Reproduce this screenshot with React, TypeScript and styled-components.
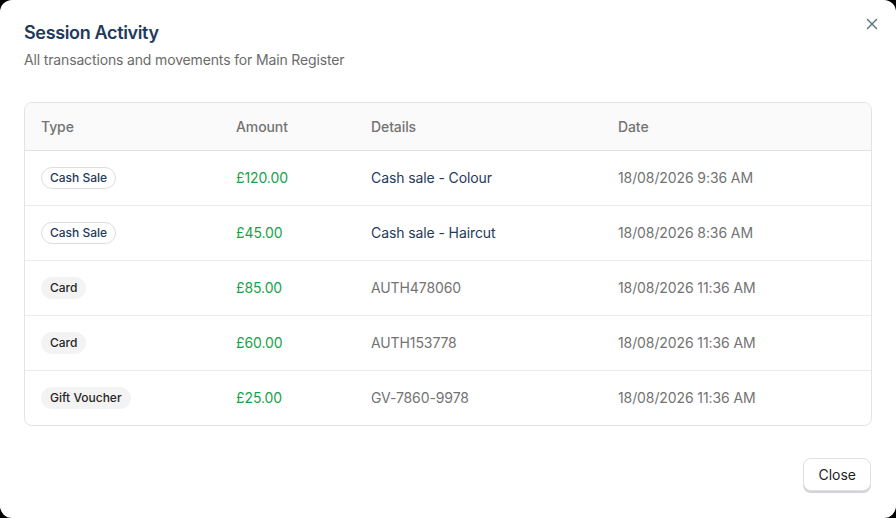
import React from 'react';
import styled, { createGlobalStyle } from 'styled-components';

const GlobalStyle = createGlobalStyle`
  html, body {
    margin: 0;
    padding: 0;
    background-color: #000000;
  }
  body {
    font-family: Inter, 'Noto Sans', sans-serif;
    letter-spacing: -0.1px;
  }
`

const Dialog = styled.div`
    position: relative;
    width: 896px;
    height: 518px;
    box-sizing: border-box;
    background-color: #ffffff;
    border-radius: 12px;
    padding: 20px 24px 24px 24px;
    display: flex;
    flex-direction: column;
`

const Header = styled.div`
    display: flex;
    flex-direction: column;
    gap: 4px;
`

const Title = styled.h2`
    margin: 0;
    font-size: 18px;
    line-height: 26px;
    font-weight: 600;
    letter-spacing: -0.35px;
    color: #1e3a5c;
`

const Subtitle = styled.p`
    margin: 0;
    font-size: 14px;
    line-height: 20px;
    letter-spacing: -0.15px;
    color: #6b6b6b;
`

const CloseIcon = styled.button`
    position: absolute;
    top: 16px;
    right: 16px;
    width: 16px;
    height: 16px;
    padding: 0;
    border: none;
    background: none;
    display: flex;
    align-items: center;
    justify-content: center;
    color: #5b6b80;
    cursor: pointer;
`

const TableCard = styled.div`
    margin-top: 32px;
    border: 1px solid #e3e3e3;
    border-radius: 8px;
    overflow: hidden;
`

const Table = styled.table`
    width: 100%;
    border-collapse: collapse;
    table-layout: fixed;
`

const HeadCell = styled.th<{ width?: number }>`
    box-sizing: border-box;
    width: ${props => props.width ? props.width + 'px' : 'auto'};
    height: 47px;
    padding: 0 16px;
    text-align: left;
    font-size: 14px;
    font-weight: 500;
    color: #737373;
    background-color: #fafafa;
    border-bottom: 1px solid #e3e3e3;
`

const Row = styled.tr`
    &:not(:last-child) td {
        border-bottom: 1px solid #ebebeb;
    }
`

const Cell = styled.td<{ tone?: 'navy' | 'green' | 'gray' }>`
    height: 54px;
    padding: 0 16px;
    font-size: 14px;
    color: ${props => props.tone === 'green' ? '#16a34a' : props.tone === 'navy' ? '#1e3a5c' : '#737373'};
`

const Badge = styled.span<{ outline?: boolean }>`
    display: inline-flex;
    align-items: center;
    height: 22px;
    box-sizing: border-box;
    padding: 0 8px;
    border-radius: 11px;
    font-size: 12px;
    font-weight: 500;
    letter-spacing: 0;
    border: 1px solid ${props => props.outline ? '#dedede' : '#f3f3f3'};
    background-color: ${props => props.outline ? '#ffffff' : '#f3f3f3'};
    color: ${props => props.outline ? '#1e3a5c' : '#262626'};
`

const Footer = styled.div`
    margin-top: auto;
    display: flex;
    justify-content: flex-end;
    padding-right: 1px;
    padding-bottom: 3px;
`

const Button = styled.button`
    height: 33px;
    padding: 0 14px;
    border: 1px solid #e0e0e0;
    border-radius: 8px;
    background-color: #ffffff;
    font-family: Inter, 'Noto Sans', sans-serif;
    font-size: 14px;
    color: #1f1f1f;
    box-shadow: 0 2px 0 #d4d4d8;
    cursor: pointer;
`

interface Activity {
    type: string
    outline: boolean
    amount: string
    details: string
    detailTone: 'navy' | 'gray'
    date: string
}

const rows: Activity[] = [
    { type: 'Cash Sale', outline: true, amount: '£120.00', details: 'Cash sale - Colour', detailTone: 'navy', date: '18/08/2026 9:36 AM' },
    { type: 'Cash Sale', outline: true, amount: '£45.00', details: 'Cash sale - Haircut', detailTone: 'navy', date: '18/08/2026 8:36 AM' },
    { type: 'Card', outline: false, amount: '£85.00', details: 'AUTH478060', detailTone: 'gray', date: '18/08/2026 11:36 AM' },
    { type: 'Card', outline: false, amount: '£60.00', details: 'AUTH153778', detailTone: 'gray', date: '18/08/2026 11:36 AM' },
    { type: 'Gift Voucher', outline: false, amount: '£25.00', details: 'GV-7860-9978', detailTone: 'gray', date: '18/08/2026 11:36 AM' },
]

const App: React.FC = () => {
    return (
        <Dialog>
            <GlobalStyle />
            <Header>
                <Title>Session Activity</Title>
                <Subtitle>All transactions and movements for Main Register</Subtitle>
            </Header>
            <CloseIcon aria-label="Close">
                <svg width="12" height="12" viewBox="0 0 12 12" fill="none" stroke="currentColor" strokeWidth="1.4" strokeLinecap="round">
                    <path d="M1.5 1.5 L10.5 10.5 M10.5 1.5 L1.5 10.5" />
                </svg>
            </CloseIcon>
            <TableCard>
                <Table>
                    <thead>
                        <tr>
                            <HeadCell width={195}>Type</HeadCell>
                            <HeadCell width={135}>Amount</HeadCell>
                            <HeadCell width={247}>Details</HeadCell>
                            <HeadCell>Date</HeadCell>
                        </tr>
                    </thead>
                    <tbody>
                        {rows.map((r, i) => (
                            <Row key={i}>
                                <Cell><Badge outline={r.outline}>{r.type}</Badge></Cell>
                                <Cell tone="green">{r.amount}</Cell>
                                <Cell tone={r.detailTone}>{r.details}</Cell>
                                <Cell tone="gray">{r.date}</Cell>
                            </Row>
                        ))}
                    </tbody>
                </Table>
            </TableCard>
            <Footer>
                <Button>Close</Button>
            </Footer>
        </Dialog>
    );
}

export default App;
